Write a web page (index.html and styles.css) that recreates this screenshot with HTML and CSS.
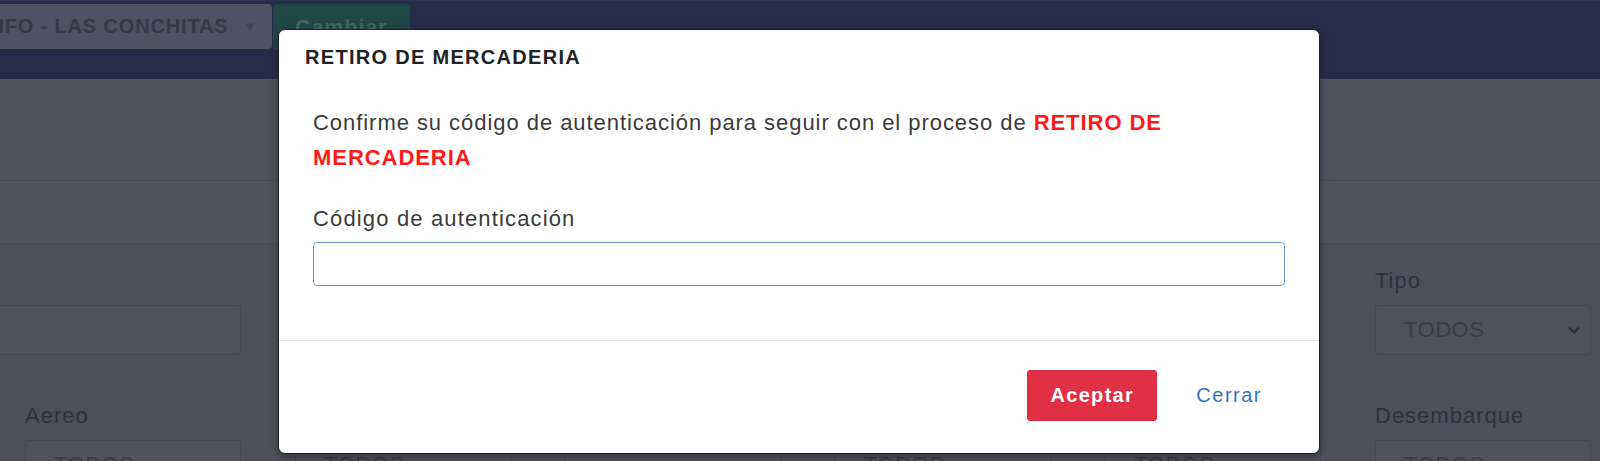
FILE: index.html
```html
<!DOCTYPE html>
<html lang="es">
<head>
<meta charset="utf-8">
<title>Retiro de mercadería</title>
<link rel="stylesheet" href="styles.css">
</head>
<body>
<div class="page">
  <header class="topbar">
    <div class="branch-select">
      <span class="branch-name">INFO - LAS CONCHITAS</span>
      <span class="caret">▼</span>
    </div>
    <button class="btn-change">Cambiar</button>
  </header>
  <section class="band band-title"></section>
  <section class="band band-tabs"></section>
  <section class="filters">
    <div class="field field-wide">
      <div class="fake-label"></div>
      <div class="box"></div>
    </div>
    <div class="field"></div>
    <div class="field"></div>
    <div class="field"></div>
    <div class="field"></div>
    <div class="field">
      <div class="label">Tipo</div>
      <div class="box select"><span>TODOS</span><svg class="chev" viewBox="0 0 12 8" width="12" height="8"><path d="M1 1.5 L6 6.5 L11 1.5" fill="none" stroke="#2e313a" stroke-width="2.2"/></svg></div>
    </div>
    <div class="field">
      <div class="label">Aereo</div>
      <div class="box select"><span>TODOS</span></div>
    </div>
    <div class="field">
      <div class="label">&nbsp;</div>
      <div class="box select"><span>TODOS</span></div>
    </div>
    <div class="field">
      <div class="label">&nbsp;</div>
      <div class="box select"></div>
    </div>
    <div class="field">
      <div class="label">&nbsp;</div>
      <div class="box select"><span>TODOS</span></div>
    </div>
    <div class="field">
      <div class="label">&nbsp;</div>
      <div class="box select"><span>TODOS</span></div>
    </div>
    <div class="field">
      <div class="label">Desembarque</div>
      <div class="box select"><span>TODOS</span></div>
    </div>
  </section>
</div>

<div class="modal" role="dialog">
  <div class="modal-header">
    <h5 class="modal-title">RETIRO DE MERCADERIA</h5>
  </div>
  <div class="modal-body">
    <p class="msg">Confirme su código de autenticación para seguir con el proceso de <strong class="hl">RETIRO DE MERCADERIA</strong></p>
    <label class="code-label" for="code">Código de autenticación</label>
    <input id="code" class="code-input" type="text">
  </div>
  <div class="modal-footer">
    <button class="btn-accept">Aceptar</button>
    <button class="btn-close">Cerrar</button>
  </div>
</div>
</body>
</html>
```
FILE: styles.css
```css
* { box-sizing: border-box; }
html, body {
  margin: 0;
  width: 1600px;
  height: 461px;
  overflow: hidden;
  background: #4d515b;
  font-family: "Liberation Sans", Arial, sans-serif;
}
.page { width: 1600px; }

.topbar {
  height: 79px;
  background: #272c4a;
  border-top: 1px solid #2f3450;
  display: flex;
  align-items: flex-start;
  padding-top: 3px;
}
.branch-select {
  width: 302px;
  margin-left: -30px;
  height: 45px;
  background: #4f5260;
  border-radius: 4px;
  display: flex;
  align-items: center;
  padding-left: 13px;
  color: #363946;
  font-size: 20px;
  font-weight: 700;
  letter-spacing: 0.85px;
}
.caret { font-size: 13px; margin-left: 15px; color: #3f4250; }
.btn-change {
  margin-left: 1px;
  width: 137px;
  height: 46px;
  background: #1f4845;
  border: 0;
  border-radius: 4px;
  color: #3f6664;
  font: 700 21px "Liberation Sans", Arial, sans-serif;
  letter-spacing: 1.2px;
  padding: 0;
}

.band { border-bottom: 1px solid #474a54; }
.band-title { height: 102px; background: #4e525c; }
.band-tabs { height: 63px; background: #50545e; }

.filters {
  display: grid;
  grid-template-columns: repeat(6, 216px);
  column-gap: 54px;
  row-gap: 46px;
  padding: 22px 0 0 25px;
}
.field { display: flex; flex-direction: column; }
.field-wide { margin-left: -60px; }
.label, .fake-label {
  height: 30px;
  line-height: 30px;
  font-size: 22px;
  letter-spacing: 1px;
  color: #2f323c;
  margin-bottom: 9px;
}
.box {
  height: 50px;
  border: 1px solid #454852;
  border-radius: 3px;
  background: #4e525c;
}
.select {
  display: flex;
  align-items: center;
  justify-content: space-between;
  padding: 0 10px 0 28px;
  font-size: 22px;
  letter-spacing: 0.5px;
  color: #3a3d47;
}

.modal {
  position: absolute;
  left: 278px;
  top: 29px;
  width: 1042px;
  height: 425px;
  background: #fff;
  border: 1px solid #1b1d24;
  border-radius: 7px;
  box-shadow: 0 3px 8px rgba(0,0,0,.35);
  display: flex;
  flex-direction: column;
}
.modal-header { padding: 15px 26px 0; height: 40px; }
.modal-title {
  margin: 0;
  font-size: 20px;
  line-height: 24px;
  font-weight: 700;
  letter-spacing: 1.3px;
  color: #222;
}
.modal-body {
  flex: 1;
  padding: 35px 34px 0 34px;
  display: flex;
  flex-direction: column;
  color: #3b3b3b;
  font-size: 22px;
}
.msg {
  margin: 0;
  line-height: 35px;
  letter-spacing: 0.95px;
  max-width: 905px;
}
.hl { color: #ff1a1a; font-weight: 700; }
.code-label {
  margin-top: 26px;
  line-height: 35px;
  letter-spacing: 1.15px;
  color: #3b3b3b;
}
.code-input {
  margin-top: 6px;
  height: 44px;
  width: 100%;
  border: 1px solid #6e98c9;
  border-radius: 4px;
  outline: none;
  font-size: 20px;
}
.modal-footer {
  height: 113px;
  border-top: 1px solid #e2e2e2;
  display: flex;
  justify-content: flex-end;
  align-items: center;
  padding: 0 37px 4px 0;
  gap: 19px;
}
.btn-accept {
  width: 130px;
  height: 51px;
  background: #e03044;
  border: 1px solid #d92a3f;
  border-radius: 3px;
  color: #fff;
  font: 700 20px "Liberation Sans", Arial, sans-serif;
  letter-spacing: 1.3px;
}
.btn-close {
  background: none;
  border: 0;
  padding: 0 20px;
  height: 51px;
  color: #3570bf;
  font: 500 20px "Liberation Sans", Arial, sans-serif;
  letter-spacing: 1.5px;
}
```
